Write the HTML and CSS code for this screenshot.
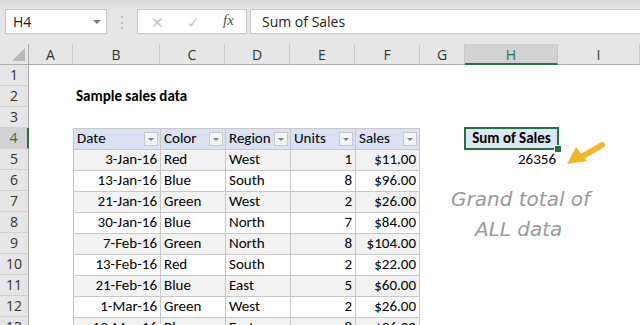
FILE: index.html
```html
<!DOCTYPE html>
<html>
<head>
    <link rel="stylesheet" href="styles.css">
    <title>Sum of Sales</title>
</head>
<body>
    <div class="ribbon">
        <div class="namebox">H4<span class="caret"></span></div>
        <div class="grip">&#8942;</div>
        <div class="fxbox">
            <span class="fx-btn">&#10005;</span>
            <span class="fx-btn">&#10003;</span>
            <span class="fx-btn fx">fx</span>
        </div>
        <div class="formula">Sum of Sales</div>
    </div>

    <div class="sheet">
        <div class="corner"><span class="tri"></span></div>
        <div class="ch">A</div><div class="ch">B</div><div class="ch">C</div><div class="ch">D</div><div class="ch">E</div>
        <div class="ch">F</div><div class="ch">G</div><div class="ch ch-on">H</div><div class="ch">I</div>

        <div class="rh">1</div><div></div><div></div><div></div><div></div><div></div><div></div><div></div><div></div><div></div>

        <div class="rh">2</div><div></div><div class="c title">Sample sales data</div><div></div><div></div><div></div><div></div><div></div><div></div><div></div>

        <div class="rh">3</div><div></div><div></div><div></div><div></div><div></div><div></div><div></div><div></div><div></div>

        <div class="rh rh-on">4</div><div></div>
        <div class="c t th">Date<span class="dd"></span></div>
        <div class="c t th">Color<span class="dd"></span></div>
        <div class="c t th">Region<span class="dd"></span></div>
        <div class="c t th">Units<span class="dd"></span></div>
        <div class="c t th last">Sales<span class="dd"></span></div>
        <div></div>
        <div class="c pivot sel">Sum of Sales<span class="handle"></span></div>
        <div></div>

        <div class="rh">5</div><div></div>
        <div class="c t band num">3-Jan-16</div><div class="c t band">Red</div><div class="c t band">West</div><div class="c t band num">1</div><div class="c t band num last">$11.00</div>
        <div></div><div class="c num total">26356</div><div></div>

        <div class="rh">6</div><div></div>
        <div class="c t num">13-Jan-16</div><div class="c t">Blue</div><div class="c t">South</div><div class="c t num">8</div><div class="c t num last">$96.00</div>
        <div></div><div></div><div></div>

        <div class="rh">7</div><div></div>
        <div class="c t band num">21-Jan-16</div><div class="c t band">Green</div><div class="c t band">West</div><div class="c t band num">2</div><div class="c t band num last">$26.00</div>
        <div></div><div></div><div></div>

        <div class="rh">8</div><div></div>
        <div class="c t num">30-Jan-16</div><div class="c t">Blue</div><div class="c t">North</div><div class="c t num">7</div><div class="c t num last">$84.00</div>
        <div></div><div></div><div></div>

        <div class="rh">9</div><div></div>
        <div class="c t band num">7-Feb-16</div><div class="c t band">Green</div><div class="c t band">North</div><div class="c t band num">8</div><div class="c t band num last">$104.00</div>
        <div></div><div></div><div></div>

        <div class="rh">10</div><div></div>
        <div class="c t num">13-Feb-16</div><div class="c t">Red</div><div class="c t">South</div><div class="c t num">2</div><div class="c t num last">$22.00</div>
        <div></div><div></div><div></div>

        <div class="rh">11</div><div></div>
        <div class="c t band num">21-Feb-16</div><div class="c t band">Blue</div><div class="c t band">East</div><div class="c t band num">5</div><div class="c t band num last">$60.00</div>
        <div></div><div></div><div></div>

        <div class="rh">12</div><div></div>
        <div class="c t num">1-Mar-16</div><div class="c t">Green</div><div class="c t">West</div><div class="c t num">2</div><div class="c t num last">$26.00</div>
        <div></div><div></div><div></div>

        <div class="rh">13</div><div></div>
        <div class="c t band num">19-Mar-16</div><div class="c t band">Blue</div><div class="c t band">East</div><div class="c t band num">8</div><div class="c t band num last">$96.00</div>
        <div></div><div></div><div></div>

        <!-- floating note shape -->
        <div class="note">
            <div>Grand total of</div>
            <div class="note2">ALL data</div>
        </div>
        <svg class="arrow" width="44" height="30" viewBox="0 0 44 30">
            <line x1="37" y1="4" x2="18" y2="15" stroke="#f3b62b" stroke-width="6" stroke-linecap="round"/>
            <polygon points="2,23 11,6 22,20" fill="#f3b62b"/>
        </svg>
    </div>
</body>
</html>
```

FILE: styles.css
```css
body {
    margin: 0;
    width: 640px;
    height: 325px;
    overflow: hidden;
    background: #fff;
    font-family: "Carlito", "Lato", sans-serif;
    font-size: 15px;
    color: #000;
}
.ribbon {
    display: flex;
    align-items: flex-start;
    height: 44px;
    box-sizing: border-box;
    padding: 9px 0 0 5px;
    background: linear-gradient(#d6d6d6, #e6e6e6 8px);
    font-family: "Open Sans", "Noto Sans", sans-serif;
    font-size: 14px;
}
.namebox {
    position: relative;
    width: 102px;
    height: 25px;
    box-sizing: border-box;
    border: 1px solid #c6c6c6;
    background: #fff;
    padding: 2px 0 0 7px;
    color: #222;
}
.caret {
    position: absolute;
    right: 5px;
    top: 10px;
    border-left: 4px solid transparent;
    border-right: 4px solid transparent;
    border-top: 4px solid #777;
}
.grip {
    width: 30px;
    text-align: center;
    color: #b5b5b5;
    padding-top: 2px;
    font-size: 16px;
}
.fxbox {
    display: flex;
    width: 110px;
    height: 25px;
    box-sizing: border-box;
    border: 1px solid #c6c6c6;
    background: #fff;
    margin-right: 3px;
}
.fx-btn {
    width: 35px;
    text-align: center;
    color: #c2c2c2;
    font-size: 15px;
    padding-top: 2px;
}
.fx-btn:first-child {
    width: 38px;
}
.fx {
    color: #555;
    font-family: "Liberation Serif", serif;
    font-style: italic;
    font-size: 15px;
}
.formula {
    flex: 1;
    height: 25px;
    box-sizing: border-box;
    border: 1px solid #c6c6c6;
    border-right: none;
    background: #fff;
    padding: 2px 0 0 11px;
    color: #222;
}

.sheet {
    position: relative;
    display: grid;
    grid-template-columns: 29px 44px 87px 65px 65px 65px 65px 45px 93px 1fr;
    grid-auto-rows: 21px;
}
.corner, .ch {
    background: #e6e6e6;
    border-bottom: 1px solid #ababab;
    box-sizing: border-box;
}
.corner {
    position: relative;
    border-right: 1px solid #ababab;
}
.tri {
    position: absolute;
    right: 3px;
    bottom: 3px;
    border-left: 13px solid transparent;
    border-bottom: 13px solid #b9b9b9;
}
.ch {
    border-right: 1px solid #c8c8c8;
    text-align: center;
    font-family: "Open Sans", "Noto Sans", sans-serif;
    font-size: 14px;
    line-height: 22px;
    color: #333;
}
.ch-on {
    background: #d2d2d2;
    border-bottom: 2px solid #217346;
    color: #217346;
}
.rh {
    background: #e6e6e6;
    border-right: 1px solid #ababab;
    border-bottom: 1px solid #d0d0d0;
    box-sizing: border-box;
    text-align: center;
    font-family: "Open Sans", "Noto Sans", sans-serif;
    font-size: 14px;
    line-height: 20px;
    color: #333;
}
.rh-on {
    background: #d2d2d2;
    border-right: 2px solid #217346;
    color: #217346;
}

.c {
    position: relative;
    box-sizing: border-box;
    padding: 0 3px;
    line-height: 21px;
    white-space: nowrap;
}
.t {
    border-top: 1px solid #c8c8c8;
    border-left: 1px solid #c8c8c8;
    line-height: 19px;
}
.last {
    border-right: 1px solid #c8c8c8;
}
.th {
    background: #d9e1f2;
}
.band {
    background: #f2f2f2;
}
.num {
    text-align: right;
}
.title {
    font-weight: bold;
}
.dd {
    position: absolute;
    right: 2px;
    top: 3px;
    width: 14px;
    height: 14px;
    box-sizing: border-box;
    border: 1px solid #c8c8c8;
    background: #f3f3f3;
}
.dd::after {
    content: "";
    position: absolute;
    left: 3px;
    top: 5px;
    border-left: 3px solid transparent;
    border-right: 3px solid transparent;
    border-top: 3px solid #808080;
}
.pivot {
    background: #dde4f2;
    font-weight: bold;
    text-align: center;
    padding: 0;
}
.sel::after {
    content: "";
    position: absolute;
    left: -1px;
    top: -1px;
    right: -1px;
    bottom: -1px;
    border: 2px solid #217346;
}
.handle {
    position: absolute;
    right: -4px;
    bottom: -4px;
    width: 6px;
    height: 6px;
    background: #217346;
    border: 1px solid #fff;
    z-index: 2;
}
.total {
    padding-right: 2px;
}
.note {
    position: absolute;
    left: 451px;
    top: 140px;
    font-family: "DejaVu Sans", sans-serif;
    font-style: italic;
    font-weight: 200;
    font-size: 20px;
    line-height: 30px;
    color: #9a9a9a;
}
.note2 {
    padding-left: 24px;
}
.arrow {
    position: absolute;
    left: 565px;
    top: 97px;
}
```
